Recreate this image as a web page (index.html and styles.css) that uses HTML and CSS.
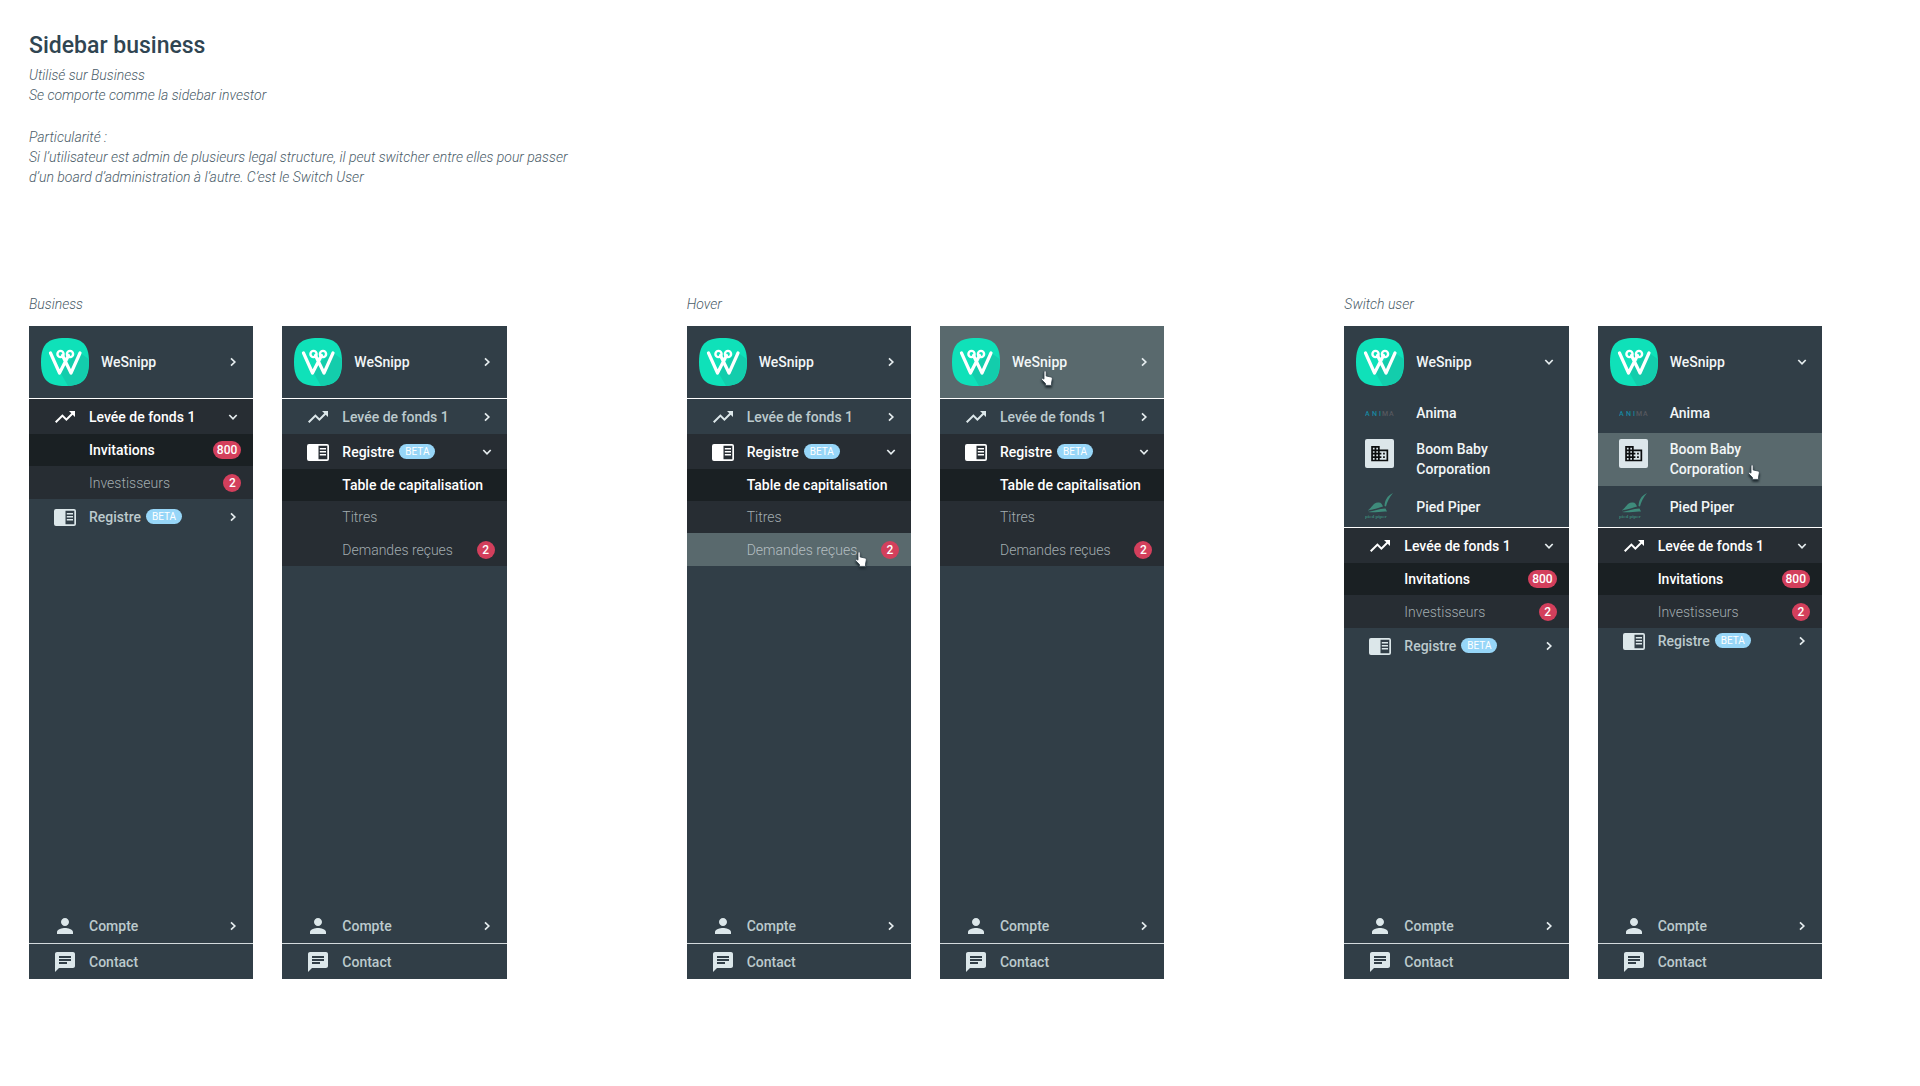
FILE: index.html
```html
<!DOCTYPE html>
<html lang="fr">
<head>
<meta charset="utf-8">
<title>Sidebar business</title>
<link rel="stylesheet" href="styles.css">
</head>
<body>
<svg class="sprite" aria-hidden="true">
  <symbol id="wesnipp" viewBox="0 0 48 48">
    <path fill="#0fe1b9" d="M24 0C41 0 48 6 48 24S41 48 24 48 0 42 0 24 7 0 24 0z"/>
    <path fill="#13cdac" d="M38.500 14.500L47.700 21C48.500 38 43 47 27 48L20 35.500 24 26z"/>
    <path fill="none" stroke="#fff" stroke-width="3.200" stroke-linecap="round" stroke-linejoin="round" d="M9.500 15L18.500 35 27.500 17.500M39 15L30 35 21.500 17.500"/>
    <circle cx="19.500" cy="16" r="3.100" fill="none" stroke="#fff" stroke-width="2.400"/>
    <circle cx="29" cy="16" r="3.100" fill="none" stroke="#fff" stroke-width="2.400"/>
  </symbol>
  <symbol id="right" viewBox="0 0 10 10"><path fill="none" stroke="currentColor" stroke-width="1.700" d="M3 1.300L6.800 5 3 8.700"/></symbol>
  <symbol id="down" viewBox="0 0 10 10"><path fill="none" stroke="currentColor" stroke-width="1.700" d="M1.300 3L5 6.800 8.700 3"/></symbol>
  <symbol id="trend" viewBox="0 0 24 24"><path fill="currentColor" d="M16 6l2.290 2.290-4.880 4.880-4-4L2 16.590 3.410 18l6-6 4 4 6.300-6.290L22 12V6z"/></symbol>
  <symbol id="reader" viewBox="0 0 24 24"><path fill="currentColor" fill-rule="evenodd" d="M3 4h18a2 2 0 0 1 2 2v13a2 2 0 0 1-2 2H3a2 2 0 0 1-2-2V6a2 2 0 0 1 2-2zM12.500 5.700v13.600h8.800V5.700zM13.800 8h6.200v1.600h-6.200zM13.800 11h6.200v1.600h-6.200zM13.800 14h6.200v1.600h-6.200z"/></symbol>
  <symbol id="person" viewBox="0 0 24 24"><path fill="currentColor" d="M12 12c2.210 0 4-1.790 4-4s-1.790-4-4-4-4 1.790-4 4 1.790 4 4 4zm0 2c-2.670 0-8 1.340-8 4v2h16v-2c0-2.660-5.330-4-8-4z"/></symbol>
  <symbol id="chat" viewBox="0 0 24 24"><path fill="currentColor" d="M20 2H4c-1.100 0-1.990.9-1.990 2L2 22l4-4h14c1.100 0 2-.9 2-2V4c0-1.100-.9-2-2-2zM6 9h12v2H6V9zm8 5H6v-2h8v2zm4-6H6V6h12v2z"/></symbol>
  <symbol id="building" viewBox="0 0 29 29">
    <rect width="29" height="29" rx="2" fill="#dce6ea"/>
    <path fill="#0b0d0e" transform="translate(4.500 4.500) scale(.85)" d="M12 7V3H2v18h20V7H12zM6 19H4v-2h2v2zm0-4H4v-2h2v2zm0-4H4V9h2v2zm0-4H4V5h2v2zm4 12H8v-2h2v2zm0-4H8v-2h2v2zm0-4H8V9h2v2zm0-4H8V5h2v2zm10 12h-8v-2h2v-2h-2v-2h2v-2h-2V9h8v10zm-2-8h-2v2h2v-2zm0 4h-2v2h2v-2z"/>
  </symbol>
  <symbol id="feather" viewBox="0 0 29 29">
    <path fill="#3e8b7b" d="M28 1C22 4 20 8 19.500 14L21 14.500C22 10 24 6 28 1zM2 18.500C7 17 7 11 13 10.500 16 10 17 12 18 14.500 12 16 8 18 2 18.500zM3 20C10 19 13 17 20.500 16.500L22 19.500C16 19 10 21 3 20z"/>
  </symbol>
  <symbol id="hand" viewBox="0 0 12 16"><path fill="#fff" stroke="#33434b" stroke-width=".8" d="M3 1.800C3 .4 5.200.4 5.200 1.800V6L10 7c1 .3 1.400 1 1.300 2L10.500 13v2.400H4.500V13.500L.8 9.800C.2 8.800 1.400 7.900 2.200 8.500L3 9.200z"/></symbol>
</svg>

<header class="intro">
  <h1>Sidebar business</h1>
  <p>Utilisé sur Business<br>Se comporte comme la sidebar investor</p>
  <p>Particularité :<br>Si l’utilisateur est admin de plusieurs legal structure, il peut switcher entre elles pour passer<br>d’un board d’administration à l’autre. C’est le Switch User</p>
</header>

<main class="boards">
  <section class="board">
    <h2>Business</h2>
    <div class="pair">
      <nav class="sidebar">
        <button class="account"><svg class="logo"><use href="#wesnipp"/></svg><span class="name">WeSnipp</span><svg class="chevron"><use href="#right"/></svg></button>
        <button class="item open"><svg class="icon"><use href="#trend"/></svg><span>Levée de fonds 1</span><svg class="chevron"><use href="#down"/></svg></button>
        <a class="sub active" href="#"><span>Invitations</span><b class="count">800</b></a>
        <a class="sub" href="#"><span>Investisseurs</span><b class="count">2</b></a>
        <button class="item"><svg class="icon"><use href="#reader"/></svg><span>Registre</span><i class="beta">BETA</i><svg class="chevron"><use href="#right"/></svg></button>
        <div class="bottom">
          <button class="item"><svg class="icon"><use href="#person"/></svg><span>Compte</span><svg class="chevron"><use href="#right"/></svg></button>
          <a class="item contact" href="#"><svg class="icon"><use href="#chat"/></svg><span>Contact</span></a>
        </div>
      </nav>
      <nav class="sidebar">
        <button class="account"><svg class="logo"><use href="#wesnipp"/></svg><span class="name">WeSnipp</span><svg class="chevron"><use href="#right"/></svg></button>
        <button class="item"><svg class="icon"><use href="#trend"/></svg><span>Levée de fonds 1</span><svg class="chevron"><use href="#right"/></svg></button>
        <button class="item open"><svg class="icon"><use href="#reader"/></svg><span>Registre</span><i class="beta">BETA</i><svg class="chevron"><use href="#down"/></svg></button>
        <a class="sub active" href="#"><span>Table de capitalisation</span></a>
        <a class="sub" href="#"><span>Titres</span></a>
        <a class="sub" href="#"><span>Demandes reçues</span><b class="count">2</b></a>
        <div class="bottom">
          <button class="item"><svg class="icon"><use href="#person"/></svg><span>Compte</span><svg class="chevron"><use href="#right"/></svg></button>
          <a class="item contact" href="#"><svg class="icon"><use href="#chat"/></svg><span>Contact</span></a>
        </div>
      </nav>
    </div>
  </section>

  <section class="board">
    <h2>Hover</h2>
    <div class="pair">
      <nav class="sidebar">
        <button class="account"><svg class="logo"><use href="#wesnipp"/></svg><span class="name">WeSnipp</span><svg class="chevron"><use href="#right"/></svg></button>
        <button class="item"><svg class="icon"><use href="#trend"/></svg><span>Levée de fonds 1</span><svg class="chevron"><use href="#right"/></svg></button>
        <button class="item open"><svg class="icon"><use href="#reader"/></svg><span>Registre</span><i class="beta">BETA</i><svg class="chevron"><use href="#down"/></svg></button>
        <a class="sub active" href="#"><span>Table de capitalisation</span></a>
        <a class="sub" href="#"><span>Titres</span></a>
        <a class="sub hovered" href="#"><span>Demandes reçues</span><b class="count">2</b><svg class="pointer on-sub"><use href="#hand"/></svg></a>
        <div class="bottom">
          <button class="item"><svg class="icon"><use href="#person"/></svg><span>Compte</span><svg class="chevron"><use href="#right"/></svg></button>
          <a class="item contact" href="#"><svg class="icon"><use href="#chat"/></svg><span>Contact</span></a>
        </div>
      </nav>
      <nav class="sidebar">
        <button class="account hovered"><svg class="logo"><use href="#wesnipp"/></svg><span class="name">WeSnipp</span><svg class="chevron"><use href="#right"/></svg><svg class="pointer on-account"><use href="#hand"/></svg></button>
        <button class="item"><svg class="icon"><use href="#trend"/></svg><span>Levée de fonds 1</span><svg class="chevron"><use href="#right"/></svg></button>
        <button class="item open"><svg class="icon"><use href="#reader"/></svg><span>Registre</span><i class="beta">BETA</i><svg class="chevron"><use href="#down"/></svg></button>
        <a class="sub active" href="#"><span>Table de capitalisation</span></a>
        <a class="sub" href="#"><span>Titres</span></a>
        <a class="sub" href="#"><span>Demandes reçues</span><b class="count">2</b></a>
        <div class="bottom">
          <button class="item"><svg class="icon"><use href="#person"/></svg><span>Compte</span><svg class="chevron"><use href="#right"/></svg></button>
          <a class="item contact" href="#"><svg class="icon"><use href="#chat"/></svg><span>Contact</span></a>
        </div>
      </nav>
    </div>
  </section>

  <section class="board">
    <h2>Switch user</h2>
    <div class="pair">
      <nav class="sidebar">
        <button class="account expanded"><svg class="logo"><use href="#wesnipp"/></svg><span class="name">WeSnipp</span><svg class="chevron"><use href="#down"/></svg></button>
        <div class="structures">
          <a class="structure" href="#"><svg class="wordmark" viewBox="0 0 29 8"><text class="anima-word" y="7"><tspan x="0">A</tspan><tspan x="7">N</tspan><tspan x="14">I</tspan><tspan class="dim" x="17">M</tspan><tspan class="dim" x="24">A</tspan></text></svg><span>Anima</span></a>
          <a class="structure" href="#"><svg class="thumb"><use href="#building"/></svg><span>Boom Baby<br>Corporation</span></a>
          <a class="structure" href="#"><svg class="thumb" viewBox="0 0 29 29"><use href="#feather"/><text class="piper-word" x="0" y="26">pied piper</text></svg><span>Pied Piper</span></a>
        </div>
        <button class="item open"><svg class="icon"><use href="#trend"/></svg><span>Levée de fonds 1</span><svg class="chevron"><use href="#down"/></svg></button>
        <a class="sub active" href="#"><span>Invitations</span><b class="count">800</b></a>
        <a class="sub" href="#"><span>Investisseurs</span><b class="count">2</b></a>
        <button class="item"><svg class="icon"><use href="#reader"/></svg><span>Registre</span><i class="beta">BETA</i><svg class="chevron"><use href="#right"/></svg></button>
        <div class="bottom">
          <button class="item"><svg class="icon"><use href="#person"/></svg><span>Compte</span><svg class="chevron"><use href="#right"/></svg></button>
          <a class="item contact" href="#"><svg class="icon"><use href="#chat"/></svg><span>Contact</span></a>
        </div>
      </nav>
      <nav class="sidebar">
        <button class="account expanded"><svg class="logo"><use href="#wesnipp"/></svg><span class="name">WeSnipp</span><svg class="chevron"><use href="#down"/></svg></button>
        <div class="structures">
          <a class="structure" href="#"><svg class="wordmark" viewBox="0 0 29 8"><text class="anima-word" y="7"><tspan x="0">A</tspan><tspan x="7">N</tspan><tspan x="14">I</tspan><tspan class="dim" x="17">M</tspan><tspan class="dim" x="24">A</tspan></text></svg><span>Anima</span></a>
          <a class="structure hovered" href="#"><svg class="thumb"><use href="#building"/></svg><span>Boom Baby<br>Corporation</span><svg class="pointer on-structure"><use href="#hand"/></svg></a>
          <a class="structure" href="#"><svg class="thumb" viewBox="0 0 29 29"><use href="#feather"/><text class="piper-word" x="0" y="26">pied piper</text></svg><span>Pied Piper</span></a>
        </div>
        <button class="item open"><svg class="icon"><use href="#trend"/></svg><span>Levée de fonds 1</span><svg class="chevron"><use href="#down"/></svg></button>
        <a class="sub active" href="#"><span>Invitations</span><b class="count">800</b></a>
        <a class="sub" href="#"><span>Investisseurs</span><b class="count">2</b></a>
        <button class="item tight"><svg class="icon"><use href="#reader"/></svg><span>Registre</span><i class="beta">BETA</i><svg class="chevron"><use href="#right"/></svg></button>
        <div class="bottom">
          <button class="item"><svg class="icon"><use href="#person"/></svg><span>Compte</span><svg class="chevron"><use href="#right"/></svg></button>
          <a class="item contact" href="#"><svg class="icon"><use href="#chat"/></svg><span>Contact</span></a>
        </div>
      </nav>
    </div>
  </section>
</main>
</body>
</html>
```
FILE: styles.css
```css
* { box-sizing: border-box; }

body {
  margin: 0;
  min-height: 100vh;
  display: flex;
  flex-direction: column;
  padding: 32px 98px 107px 29px;
  background: #fff;
  color: #4a5c68;
  font-family: Roboto, "Liberation Sans", sans-serif;
  font-size: 14px;
  line-height: 20px;
}

.sprite { position: absolute; width: 0; height: 0; }

.intro { padding-bottom: 107px; }

h1 {
  margin: 0 0 5px;
  color: #304552;
  font-size: 23px;
  font-weight: 500;
  line-height: 28px;
}

p, h2 {
  margin: 0;
  font-size: 14px;
  font-style: italic;
  font-weight: 300;
}

p + p { margin-top: 22px; }
h2 { margin-bottom: 12px; }

.boards {
  flex: 1;
  display: grid;
  grid-template-columns: repeat(3, minmax(0, 1fr));
  gap: 180px;
}

.board { display: flex; flex-direction: column; }

.pair {
  flex: 1;
  display: grid;
  grid-template-columns: repeat(2, minmax(0, 1fr));
  gap: 29px;
}

.sidebar {
  display: flex;
  flex-direction: column;
  background: #313e47;
  color: #fff;
}

button {
  width: 100%;
  border: 0;
  background: none;
  font: inherit;
  text-align: left;
  cursor: pointer;
}

a { text-decoration: none; }

.account, .item, .sub, .structure {
  position: relative;
  display: flex;
  align-items: center;
  font-weight: 500;
}

.account {
  padding: 12px 15px 12px 12px;
  border-bottom: 1px solid #fff;
  color: #f2f6f7;
}

.account.expanded { padding-bottom: 7px; border-bottom: 0; }

.logo { width: 48px; height: 48px; }
.name { margin-left: 12px; }

.item {
  min-height: 35px;
  padding: 0 15px 0 12px;
  color: #bccacd;
}

.item.open { background: #272d33; color: #fff; }
.item.tight { min-height: 25px; }

.icon {
  width: 24px;
  height: 24px;
  margin: 0 12px;
  color: #dce7ea;
}

.open .icon { color: #fff; }

.chevron {
  width: 10px;
  height: 10px;
  margin-left: auto;
  color: #e6edef;
}

.sub {
  min-height: 32px;
  padding: 0 12px 0 60px;
  background: #272d33;
  color: #a2acb0;
  font-weight: 300;
}

.sub:has(+ :not(.sub)) { min-height: 33px; }

.sub.active { background: #1a2023; color: #fff; font-weight: 500; }

.hovered { background: #59696d; }
.sub.hovered { color: #b4bec1; }

.count {
  min-width: 18px;
  margin-left: auto;
  padding: 0 4px;
  border-radius: 9px;
  background: #d33f5c;
  color: #fff;
  font-size: 12px;
  font-weight: 500;
  line-height: 18px;
  text-align: center;
}

.beta {
  margin-left: 5px;
  padding: 0 6px;
  border-radius: 8px;
  background: #97d6f8;
  color: #fff;
  font-size: 10px;
  font-style: normal;
  font-weight: 400;
  line-height: 15px;
}

.structures { border-bottom: 1px solid #fff; }

.structure {
  align-items: flex-start;
  gap: 22px;
  padding: 6px 12px 7px 21px;
  color: #f2f6f7;
}

.structure:first-child, .structure:last-child { align-items: center; }
.structure:first-child { min-height: 40px; }
.structure:last-child { padding-bottom: 6px; }

.thumb { width: 29px; height: 29px; }
.wordmark { width: 29px; height: 8px; }

.anima-word { font: 500 7px Roboto, sans-serif; fill: #1787a0; }
.anima-word .dim { fill: #56585f; }
.piper-word { font: 700 5px "Liberation Serif", serif; fill: #3a8276; }

.bottom { margin-top: auto; }
.contact { border-top: 1px solid #d3dadd; min-height: 36px; }

.pointer {
  position: absolute;
  width: 12px;
  height: 16px;
  filter: drop-shadow(0 2px 1px #1d292f);
}

.on-account { left: 101px; top: 44px; }
.on-sub { left: 168px; top: 18px; }
.on-structure { left: 150px; top: 31px; }
```
